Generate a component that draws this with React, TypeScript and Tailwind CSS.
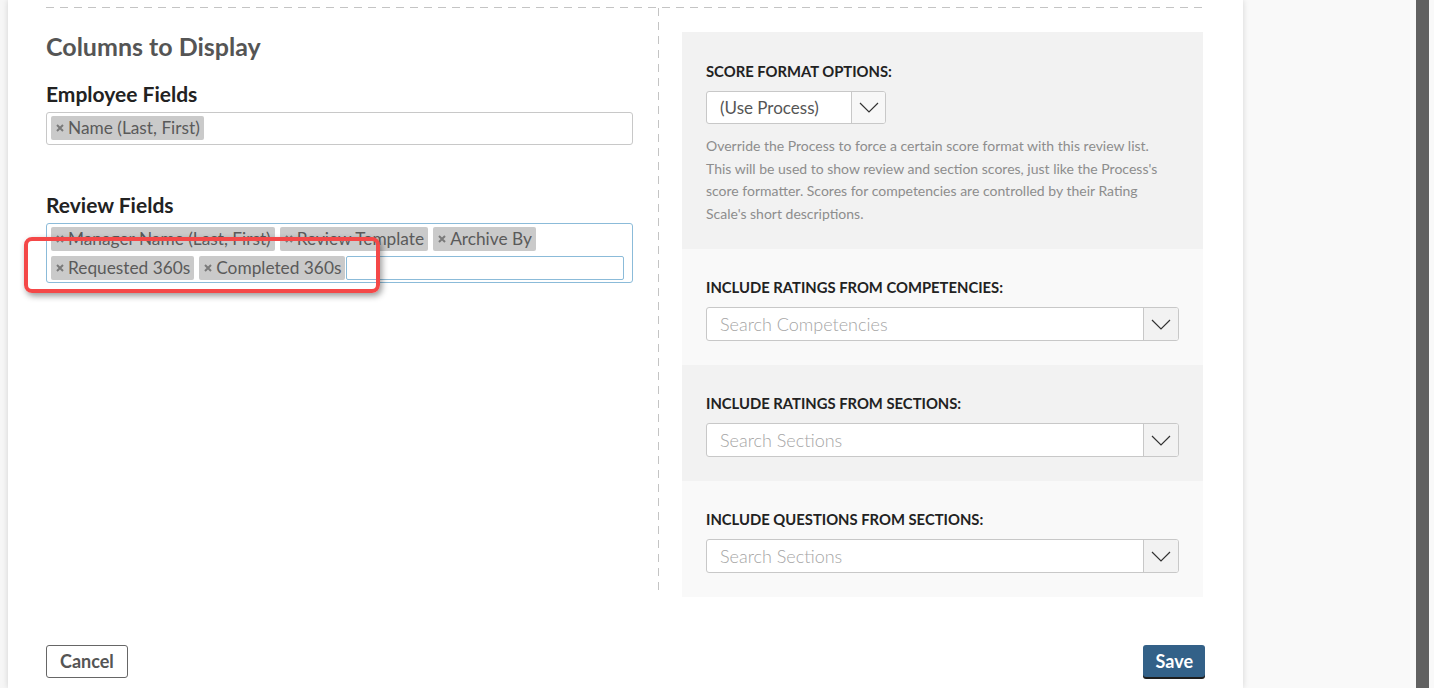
import React from "react";

const Chevron = () => (
  <svg width="20" height="11" viewBox="0 0 20 11" fill="none">
    <path d="M1 1 L10 10 L19 1" stroke="#333" strokeWidth="1.2" />
  </svg>
);

const XMark = () => (
  <svg width="8" height="8" viewBox="0 0 8 8" fill="none" className="shrink-0">
    <path d="M1 1 L7 7 M7 1 L1 7" stroke="#7a7a7a" strokeWidth="2" />
  </svg>
);

const Tag = ({ label }: { label: string }) => (
  <span className="flex h-[24px] items-center gap-[4px] rounded-[2px] bg-[#cacaca] pl-[5px] pr-[4px] text-[17.3px] leading-[24px] text-[#5a5a5a]">
    <XMark />
    {label}
  </span>
);

const SearchSelect = ({ placeholder }: { placeholder: string }) => (
  <div className="mt-[11px] flex h-[34px] w-[473px] overflow-hidden rounded-[3px] border border-[#c8c8c8] bg-white">
    <div className="flex flex-1 items-center pl-[13px] text-[18px] font-light text-[#a5a5a5]">
      {placeholder}
    </div>
    <div className="flex w-[35px] items-center justify-center border-l border-[#c8c8c8] bg-[#f2f2f2]">
      <Chevron />
    </div>
  </div>
);

const Label = ({ children }: { children: React.ReactNode }) => (
  <div className="text-[14.8px] font-bold uppercase leading-[18px] text-[#222]">{children}</div>
);

export default function App() {
  return (
    <div className="flex h-[688px] w-full overflow-hidden bg-[#f9f9f9] font-['Lato',sans-serif]">
      <div className="w-[8px] shrink-0 bg-[#f6f6f6]" />
      <div className="relative flex w-[1235px] shrink-0 flex-col bg-white shadow-[0_0_6px_rgba(0,0,0,0.15)]">
        <div className="ml-[38px] mt-[7px] h-px w-[1160px] bg-[repeating-linear-gradient(to_right,#c4c4c4_0_8px,transparent_8px_14px)]" />
        <div className="flex">
          {/* left column */}
          <div className="ml-[38px] w-[612px] pt-6">
            <h2 className="text-[25px] font-bold leading-[28px] text-[#555]">Columns to Display</h2>
            <h3 className="mt-[22px] text-[21px] font-bold leading-6 text-[#222]">Employee Fields</h3>
            <div className="mt-[6px] flex h-[33px] w-[587px] items-start rounded-[3px] border border-[#c8c8c8] px-[4px] pt-[3px]">
              <Tag label="Name (Last, First)" />
            </div>
            <h3 className="mt-[48px] text-[21px] font-bold leading-6 text-[#222]">Review Fields</h3>
            <div className="mt-[6px] flex w-[587px] flex-wrap gap-x-[5px] gap-y-[5px] rounded-[3px] border border-[#8bbbd9] pb-[2px] pl-[4px] pr-[8px] pt-[3px]">
              <Tag label="Manager Name (Last, First)" />
              <Tag label="Review Template" />
              <Tag label="Archive By" />
              <Tag label="Requested 360s" />
              <Tag label="Completed 360s" />
              <div className="ml-[-4px] h-[24px] min-w-[100px] flex-1 rounded-[2px] border-[1.5px] border-[#8bbbd9]" />
            </div>
          </div>
          {/* divider */}
          <div className="mb-[7px] w-px bg-[repeating-linear-gradient(to_bottom,#c4c4c4_0_8px,transparent_8px_14px)]" />
          {/* right column */}
          <div className="pl-[23px] pt-6">
            <div className="w-[521px]">
              <div className="h-[217px] bg-[#f2f2f2] px-6 pt-[30px]">
                <Label>Score Format Options:</Label>
                <div className="mt-[11px] flex h-[33px] w-[180px] overflow-hidden rounded-[3px] border border-[#c8c8c8] bg-white">
                  <div className="flex flex-1 items-center pl-[13px] text-[17px] text-[#555]">(Use Process)</div>
                  <div className="flex w-[34px] items-center justify-center border-l border-[#c8c8c8] bg-[#f7f7f7]">
                    <Chevron />
                  </div>
                </div>
                <p className="mt-[11px] text-[14px] leading-[22.5px] text-[#8d8d8d]">
                  Override the Process to force a certain score format with this review list.
                  <br />
                  This will be used to show review and section scores, just like the Process's
                  <br />
                  score formatter. Scores for competencies are controlled by their Rating
                  <br />
                  Scale's short descriptions.
                </p>
              </div>
              <div className="h-[116px] bg-[#f9f9f9] px-6 pt-[29px]">
                <Label>Include Ratings From Competencies:</Label>
                <SearchSelect placeholder="Search Competencies" />
              </div>
              <div className="h-[116px] bg-[#f2f2f2] px-6 pt-[29px]">
                <Label>Include Ratings From Sections:</Label>
                <SearchSelect placeholder="Search Sections" />
              </div>
              <div className="h-[116px] bg-[#f9f9f9] px-6 pt-[29px]">
                <Label>Include Questions From Sections:</Label>
                <SearchSelect placeholder="Search Sections" />
              </div>
            </div>
          </div>
        </div>
        {/* footer */}
        <div className="ml-[38px] mt-[48px] flex w-[1159px] items-start justify-between">
          <button className="h-[33px] rounded-[3px] border border-[#666] bg-white px-[13px] text-[18px] font-bold text-[#555]">
            Cancel
          </button>
          <button className="h-[32px] rounded-[3px] bg-[#336188] px-[12px] text-[18px] font-bold text-white shadow-[0_2px_0_#1e1e1e]">
            Save
          </button>
        </div>
        {/* annotation */}
        <div className="pointer-events-none absolute left-[16px] top-[237px] h-[56px] w-[356px] rounded-[8px] border-4 border-[#f44848] shadow-[2px_3px_6px_rgba(0,0,0,0.4)]" />
      </div>
      <div className="flex-1 bg-[#f9f9f9]" />
      <div className="w-[13px] shrink-0 bg-[#616161]" />
      <div className="w-[5px] shrink-0 bg-[#f9f9f9]" />
    </div>
  );
}
